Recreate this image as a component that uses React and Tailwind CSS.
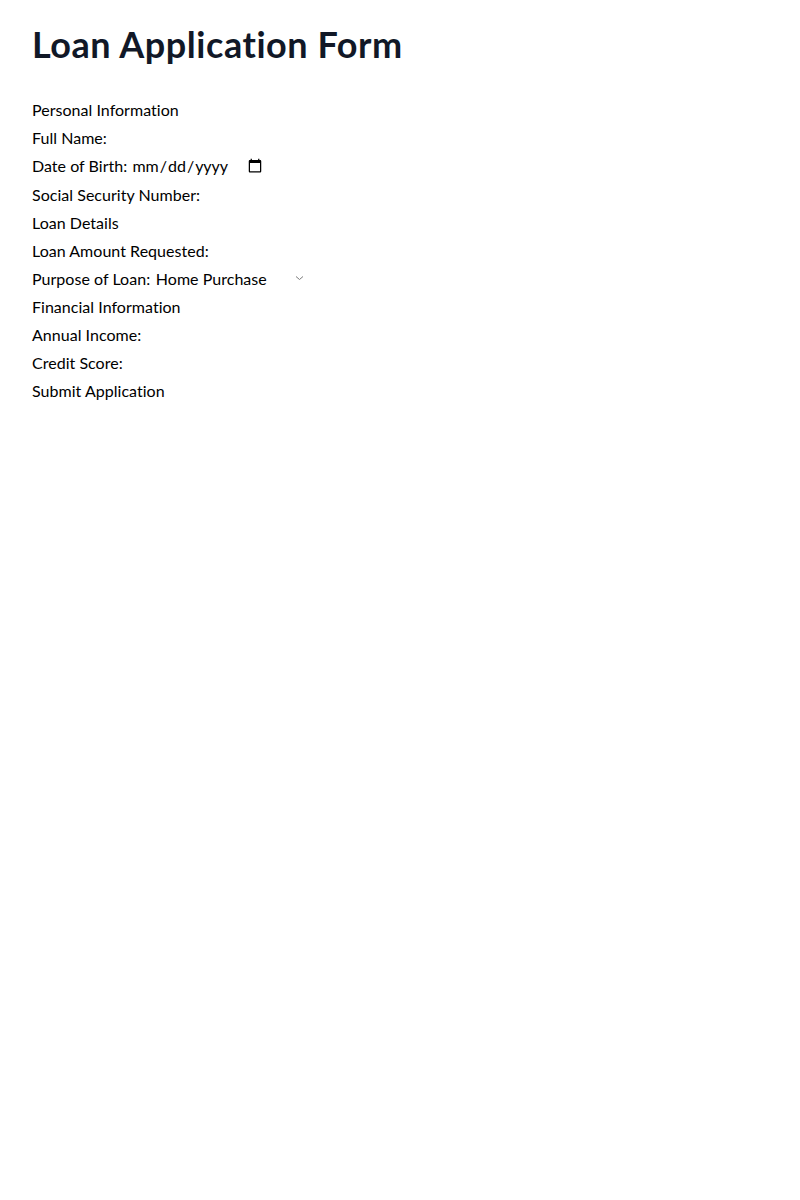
import React from "react";

export default function App() {
  return (
    <div className="min-h-[1200px] bg-white px-8 pt-6 text-black" style={{ fontFamily: "Lato, 'Noto Sans', sans-serif" }}>
      <h1 className="text-4xl font-bold text-[#111827] leading-10 tracking-[0.55px]">Loan Application Form</h1>
      <form className="mt-8 text-base leading-7 tracking-[0.03px]">
        <fieldset>
          <legend>Personal Information</legend>
          <div>
            <label htmlFor="name">Full Name:</label>
            <input id="name" type="text" className="outline-none" />
          </div>
          <div className="h-[29px]">
            <label htmlFor="dob">Date of Birth: </label>
            <input id="dob" type="date" className="w-[134px] tracking-normal" />
          </div>
          <div>
            <label htmlFor="ssn">Social Security Number:</label>
            <input id="ssn" type="text" />
          </div>
        </fieldset>
        <fieldset>
          <legend>Loan Details</legend>
          <div>
            <label htmlFor="amt">Loan Amount Requested:</label>
            <input id="amt" type="number" />
          </div>
          <div>
            <label htmlFor="purpose">Purpose of Loan: </label>
            <span className="relative inline-block">
              <select id="purpose" defaultValue="home" className="w-[160px] appearance-none pl-[1.5px] pr-6">
                <option value="home">Home Purchase</option>
                <option value="car">Car Purchase</option>
                <option value="edu">Education</option>
              </select>
              <svg className="pointer-events-none absolute right-[10px] top-[10px]" width="9" height="6" viewBox="0 0 9 6" fill="none">
                <path d="M1 1.5l3.5 3 3.5-3" stroke="#7b7b7b" strokeWidth="1" />
              </svg>
            </span>
          </div>
        </fieldset>
        <fieldset>
          <legend>Financial Information</legend>
          <div>
            <label htmlFor="inc">Annual Income:</label>
            <input id="inc" type="number" />
          </div>
          <div>
            <label htmlFor="cs">Credit Score:</label>
            <input id="cs" type="number" />
          </div>
        </fieldset>
        <button type="submit">Submit Application</button>
      </form>
    </div>
  );
}
